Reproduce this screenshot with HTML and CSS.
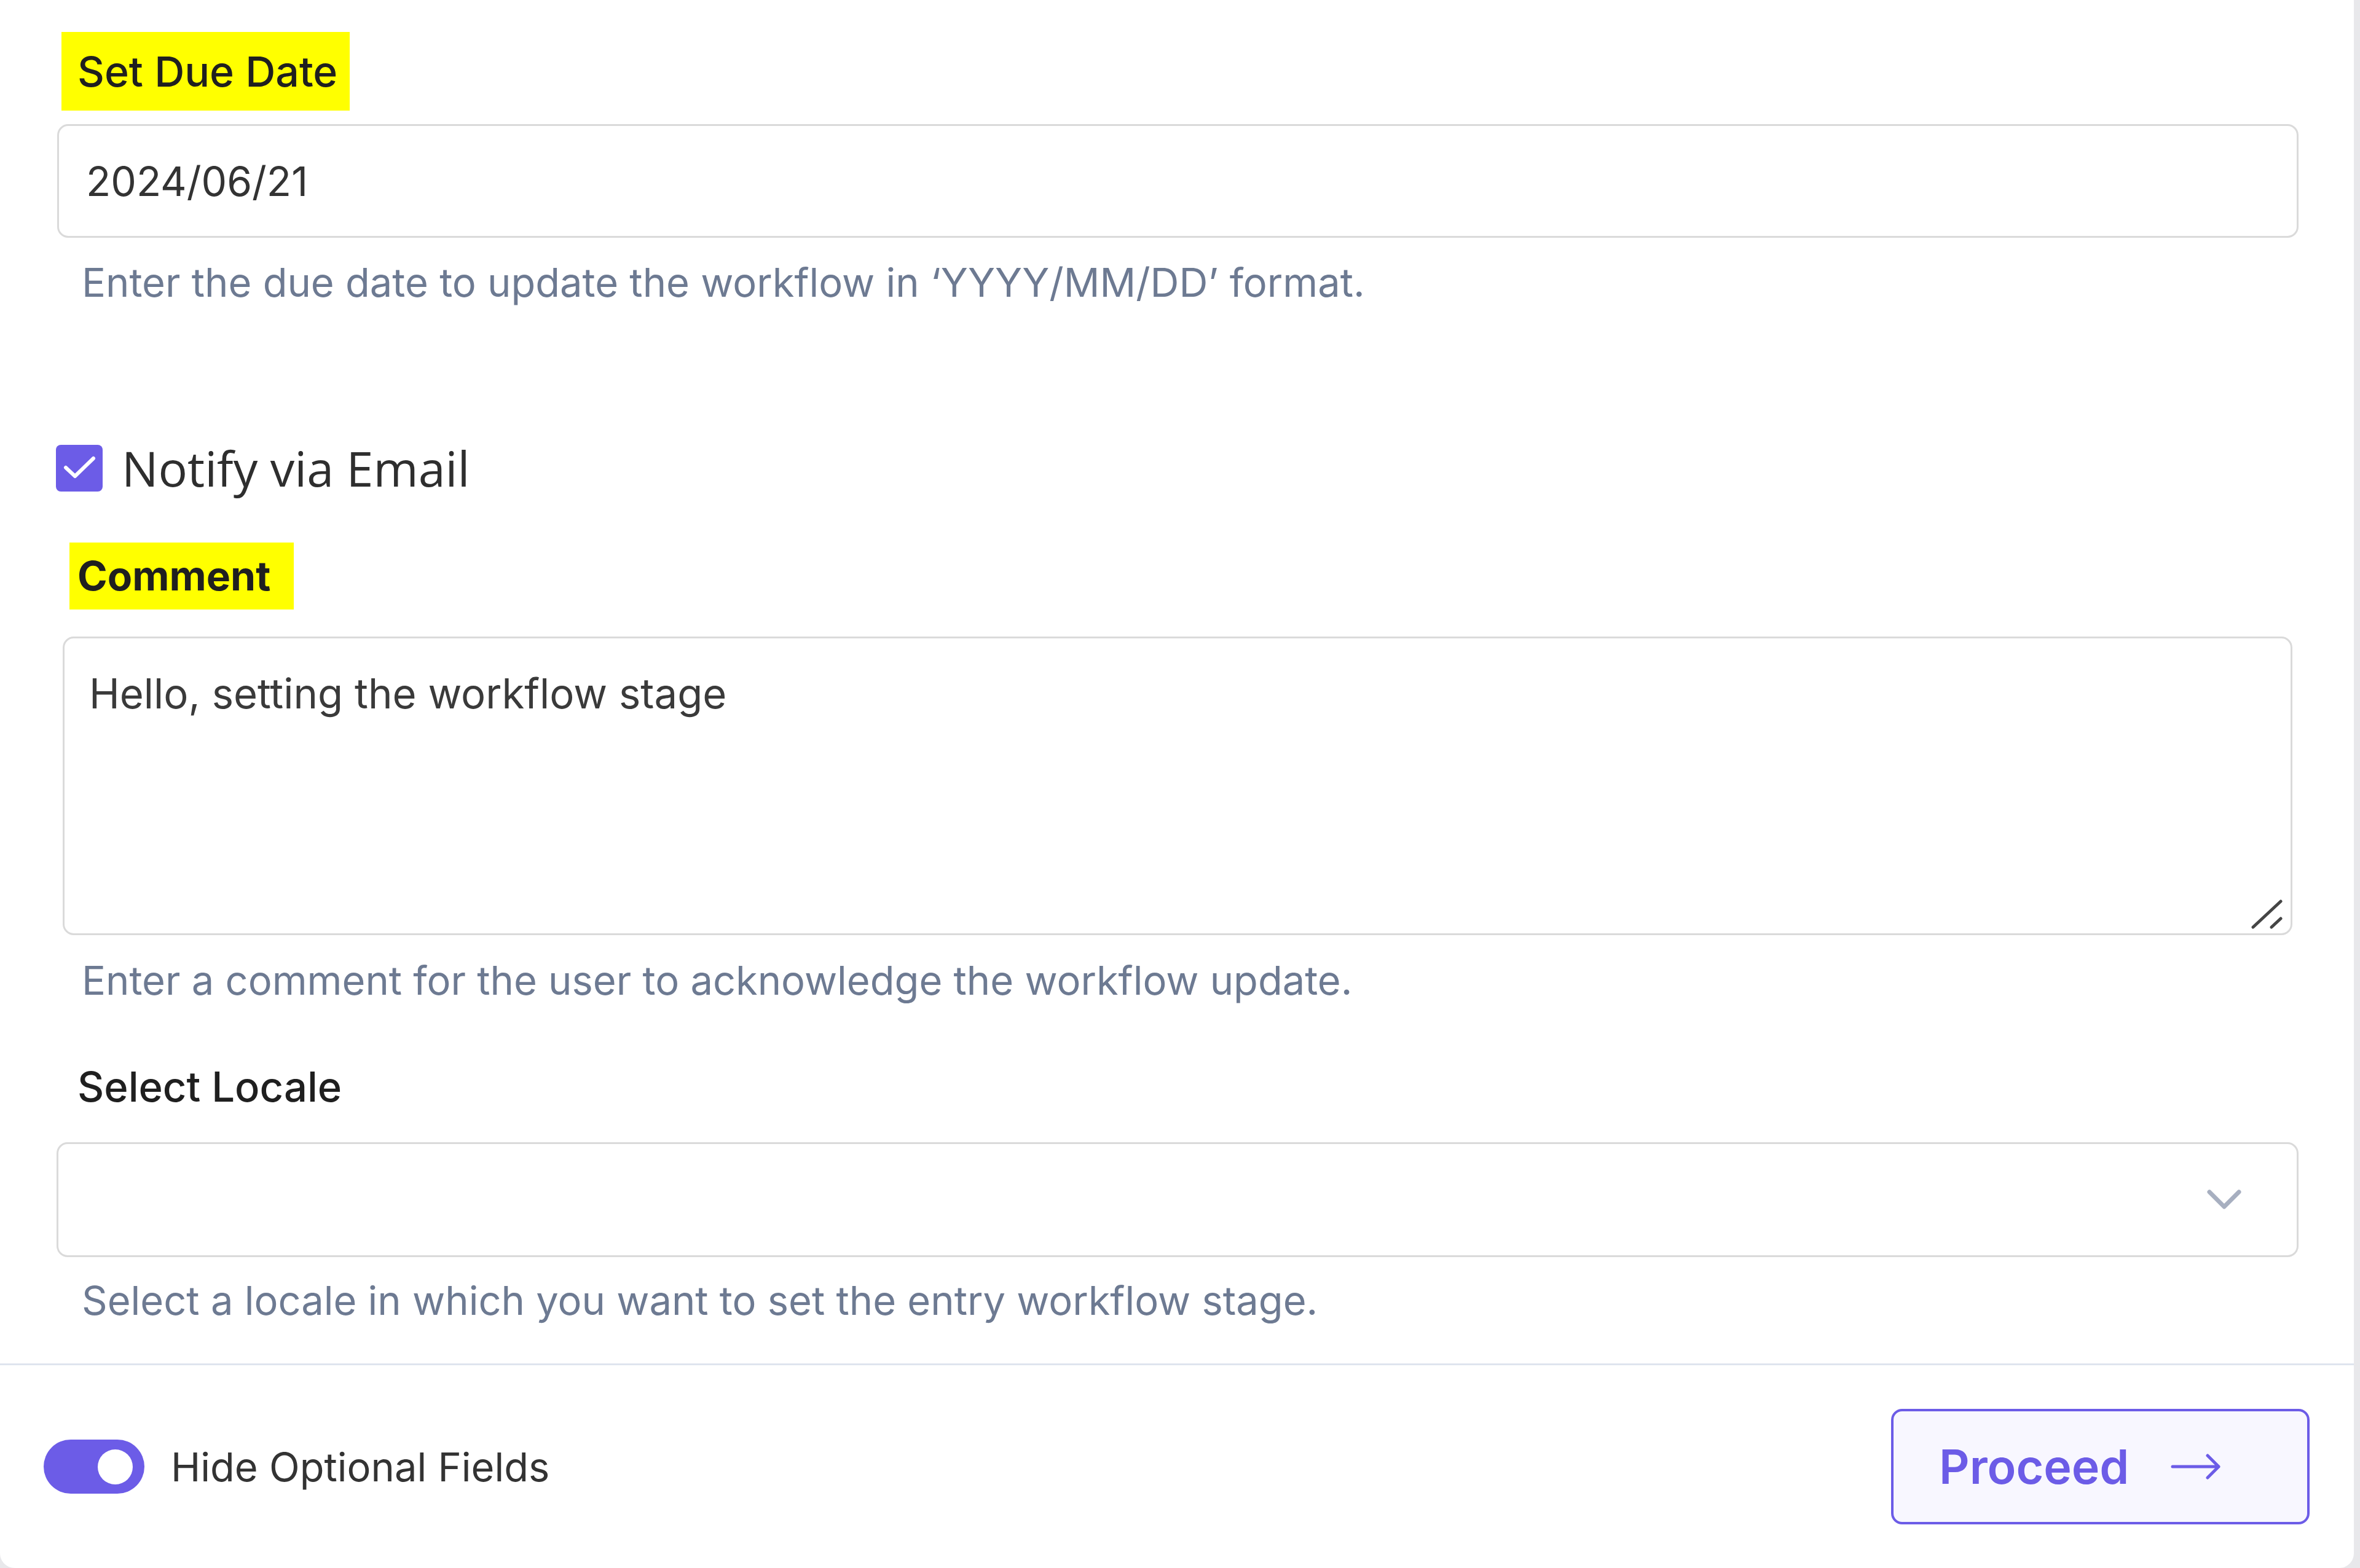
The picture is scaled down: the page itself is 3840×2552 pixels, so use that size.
FILE: index.html
```html
<!DOCTYPE html>
<html>
<head>
  <meta charset="UTF-8">
  <meta name="viewport" content="width=device-width, initial-scale=1.0">
  <title>Set Workflow Stage</title>
  <link rel="stylesheet" href="styles.css">
</head>
<body>
  <div class="panel">
    <form class="form">
      <label class="field-label marked" for="due-date">Set Due Date</label>
      <input class="text-input" id="due-date" type="text" value="2024/06/21">
      <p class="help">Enter the due date to update the workflow in ‘YYYY/MM/DD’ format.</p>

      <div class="check-row">
        <span class="checkbox">
          <svg width="76" height="76" viewBox="0 0 76 76"><path d="M16 37 L31 51 L61 22" fill="none" stroke="#fff" stroke-width="6" stroke-linecap="round" stroke-linejoin="round"/></svg>
        </span>
        <span class="check-text">Notify via Email</span>
      </div>

      <label class="field-label marked bold" for="comment">Comment</label>
      <div class="textarea-wrap">
        <textarea class="text-area" id="comment">Hello, setting the workflow stage</textarea>
        <!-- resize grip -->
        <svg class="grip" width="52" height="48" viewBox="0 0 52 48"><path d="M3 45 L48 3 M33 45 L48 31" stroke="#454545" stroke-width="5" stroke-linecap="round"/></svg>
      </div>
      <p class="help">Enter a comment for the user to acknowledge the workflow update.</p>

      <label class="field-label plain" for="locale">Select Locale</label>
      <div class="select" id="locale">
        <svg width="56" height="34" viewBox="0 0 56 34"><path d="M4 4 L28 28 L52 4" fill="none" stroke="#a7afc0" stroke-width="7" stroke-linecap="round" stroke-linejoin="round"/></svg>
      </div>
      <p class="help">Select a locale in which you want to set the entry workflow stage.</p>
    </form>

    <div class="footer">
      <div class="toggle-row">
        <span class="toggle"><span class="knob"></span></span>
        <span class="toggle-text">Hide Optional Fields</span>
      </div>
      <button class="proceed" type="button">
        <span>Proceed</span>
        <svg width="82" height="44" viewBox="0 0 82 44"><path d="M3 22 H78 M60 4 L78 22 L60 40" fill="none" stroke="#6c5ce7" stroke-width="5" stroke-linecap="round" stroke-linejoin="round"/></svg>
      </button>
    </div>
  </div>
</body>
</html>
```

FILE: styles.css
```css
* {
  box-sizing: border-box;
}
body {
  margin: 0;
  height: 2552px;
  overflow: hidden;
  background-color: #e8e8eb;
  font-family: Inter, "Noto Sans", sans-serif;
}
.panel {
  width: 3830px;
  height: 2552px;
  background-color: #fff;
  border-radius: 0 0 24px 24px;
  display: flex;
  flex-direction: column;
}
.form {
  display: flex;
  flex-direction: column;
  padding: 52px 90px 65px 93px;
  border-bottom: 3px solid #dfe4ee;
}
.field-label {
  align-self: flex-start;
  font-size: 67px;
  line-height: 80px;
  font-weight: 500;
  color: #1f1f1f;
}
.marked {
  background-color: #ffff00;
}
.form > .marked:first-child {
  font-size: 68px;
  margin: 0 0 22px 7px;
  padding: 24px 20px 24px 26px;
}
.bold {
  font-size: 66px;
  font-weight: 700;
  margin: 0 0 44px 20px;
  padding: 14px 38px 15px 13px;
}
.plain {
  margin: 0 0 50px 33px;
}
.text-input {
  height: 185px;
  width: 100%;
  border: 3px solid #dadada;
  border-radius: 18px;
  padding: 0 44px;
  font-family: Inter, sans-serif;
  font-size: 66px;
  color: #333;
  outline: none;
  margin: 0 0 36px;
}
.help {
  margin: 0 0 0 40px;
  font-size: 65px;
  line-height: 74px;
  color: #6d7a92;
}
.form > .help:nth-of-type(1) {
  margin-bottom: 225px;
}
.check-row {
  display: flex;
  align-items: center;
  gap: 31px;
  margin: 0 0 81px -2px;
}
.checkbox {
  width: 76px;
  height: 76px;
  border-radius: 8px;
  background-color: #6c5ce7;
  display: flex;
}
.check-text {
  font-family: "Open Sans", sans-serif;
  font-size: 79px;
  line-height: 80px;
  color: #2e2e2e;
}
.textarea-wrap {
  position: relative;
  height: 486px;
  margin: 0 10px 37px 9px;
}
.text-area {
  display: block;
  width: 100%;
  height: 100%;
  resize: none;
  border: 3px solid #dadada;
  border-radius: 18px;
  padding: 50px 40px;
  font-family: Inter, sans-serif;
  font-size: 67px;
  line-height: 1.2;
  color: #3a3a3a;
  outline: none;
}
.grip {
  position: absolute;
  right: 15px;
  bottom: 10px;
}
.form > .help:nth-of-type(2) {
  margin-bottom: 96px;
}
.select {
  height: 187px;
  border: 3px solid #dadada;
  border-radius: 18px;
  margin: 0 0 34px -1px;
  display: flex;
  align-items: center;
  justify-content: flex-end;
  padding: 0 90px 0 0;
}
.footer {
  flex: 1;
  display: flex;
  align-items: center;
  justify-content: space-between;
  padding: 0 72px 0 71px;
}
.toggle-row {
  display: flex;
  align-items: center;
  gap: 43px;
}
.toggle {
  width: 164px;
  height: 88px;
  border-radius: 44px;
  background-color: #6c5ce7;
  display: flex;
  align-items: center;
  justify-content: flex-end;
  padding-right: 19px;
}
.knob {
  width: 57px;
  height: 57px;
  border-radius: 50%;
  background-color: #fff;
}
.toggle-text {
  font-size: 65px;
  color: #333;
}
.proceed {
  width: 681px;
  height: 188px;
  border: 4px solid #6c5ce7;
  border-radius: 18px;
  background-color: #f8f7ff;
  display: flex;
  align-items: center;
  gap: 68px;
  padding: 0 0 0 74px;
  font-family: Inter, sans-serif;
  font-size: 77px;
  font-weight: 600;
  color: #6c5ce7;
}
```
